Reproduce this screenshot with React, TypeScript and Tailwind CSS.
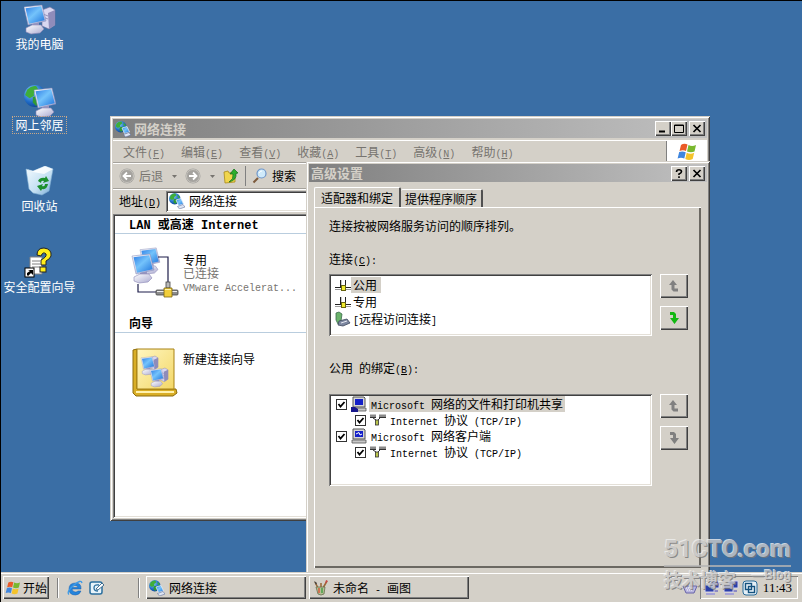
import React, { useState } from 'react';

const windowEdge =
  'bg-[#d4d0c8] p-[3px] shadow-[inset_1px_1px_0_#d4d0c8,inset_-1px_-1px_0_#404040,inset_2px_2px_0_#fff,inset_-2px_-2px_0_#808080]';
const raised =
  'bg-[#d4d0c8] shadow-[inset_1px_1px_0_#fff,inset_-1px_-1px_0_#404040,inset_-2px_-2px_0_#808080]';
const sunken =
  'bg-white p-[2px] shadow-[inset_1px_1px_0_#808080,inset_-1px_-1px_0_#fff,inset_2px_2px_0_#404040,inset_-2px_-2px_0_#e4e0d8]';

interface TxtProps {
  children: string;
  hotkey?: string;
  large?: boolean;
}

// Latin letters take half the width of a Chinese character
const Txt = ({ children, hotkey, large }: TxtProps) => {
  const latin = `font-['Liberation_Mono',monospace] leading-none ${large ? 'text-[12px]' : 'text-[10px]'}`;
  return (
    <span className="whitespace-pre">
      {children.split(/([\x20-\x7e]+)/).map((part, i) =>
        i % 2 ? <span key={i} className={latin}>{part}</span> : part
      )}
      {hotkey && (
        <span className={latin}>
          (<u>{hotkey}</u>)
        </span>
      )}
    </span>
  );
};

const Gradients = () => (
  <svg width="0" height="0" className="absolute" aria-hidden="true">
    <defs>
      <linearGradient id="screen" x1="0" y1="0" x2="1" y2="1">
        <stop offset="0" stopColor="#2f7fe6" />
        <stop offset="0.45" stopColor="#74c3fb" />
        <stop offset="1" stopColor="#1f74dc" />
      </linearGradient>
      <linearGradient id="shell" x1="0" y1="0" x2="1" y2="1">
        <stop offset="0" stopColor="#ffffff" />
        <stop offset="1" stopColor="#a9a8cf" />
      </linearGradient>
      <radialGradient id="globe" cx="0.35" cy="0.3" r="0.8">
        <stop offset="0" stopColor="#8fd3ff" />
        <stop offset="0.6" stopColor="#1f6cc8" />
        <stop offset="1" stopColor="#0c3b86" />
      </radialGradient>
      <linearGradient id="bin" x1="0" y1="0" x2="1" y2="1">
        <stop offset="0" stopColor="#f4fbff" />
        <stop offset="0.6" stopColor="#c3dff2" />
        <stop offset="1" stopColor="#6fa5d2" />
      </linearGradient>
      <linearGradient id="book" x1="0" y1="0" x2="1" y2="1">
        <stop offset="0" stopColor="#fff6c0" />
        <stop offset="1" stopColor="#f3d767" />
      </linearGradient>
    </defs>
  </svg>
);

const Monitor = ({ transform }: { transform?: string }) => (
  <g transform={transform}>
    <path d="M8 18 L15 17 L15 24 L8 25Z" fill="#9a98c2" />
    <path d="M2 24 L8 21 L17 21 L20 25 L16 29 L7 30 L2 28Z" fill="url(#shell)" stroke="#8986b5" strokeWidth="0.6" />
    <path d="M0 3 L18 1 L22 17 L4 21Z" fill="url(#shell)" stroke="#7d86b8" strokeWidth="0.5" />
    <path d="M1.500 4.300 L17.200 2.300 L20.700 16.200 L5 19.700Z" fill="url(#screen)" />
  </g>
);

const Tower = ({ transform }: { transform?: string }) => (
  <g transform={transform}>
    <path d="M0 3 L8 0 L13 3 L13 18 L7 22 L0 19Z" fill="#d9d7f0" stroke="#77739f" strokeWidth="0.6" />
    <path d="M6 6 L13 3 L13 18 L7 22Z" fill="#8f8cba" />
    <path d="M1 7 L6 9 M1 10 L6 12" stroke="#8581ad" strokeWidth="0.8" />
  </g>
);

const Globe = ({ transform }: { transform?: string }) => (
  <g transform={transform}>
    <circle cx="10" cy="10" r="10" fill="url(#globe)" />
    <path d="M3 4 Q7 0 11 1 L13 4 L9 7 L9 10 L5 12 L1 9Z" fill="#3fae3a" />
    <path d="M8 11 L14 10 L16 14 L11 19 L8 16Z" fill="#2f9a35" />
    <path d="M15 3 Q19 6 19 10 L15 8Z" fill="#3fae3a" />
  </g>
);

const ComputerIcon = () => (
  <svg viewBox="0 0 32 32" className="size-8">
    <Tower transform="translate(18 3)" />
    <Monitor />
  </svg>
);

const PlacesIcon = () => (
  <svg viewBox="0 0 32 32" className="size-8">
    <Globe transform="scale(1.1)" />
    <Monitor transform="translate(10 2)" />
  </svg>
);

const RecycleIcon = () => (
  <svg viewBox="0 0 32 32" className="size-8">
    <path d="M2 3 L9 5 L21 0 L29 3 L25 25 L18 29 L9 27 L5 23Z" fill="url(#bin)" stroke="#7faed4" strokeWidth="0.6" />
    <path d="M2 3 L9 6 L20 8 L29 3 L21 0 L9 5Z" fill="#fff" opacity="0.8" />
    <path d="M14 15 Q16 11 21 12 L22 10 L25 15 L19 17 L20 15 Q17 14 17 17Z" fill="#1c8f2d" />
    <path d="M24 18 Q23 24 18 23 L17 25 L13 20 L19 18 L18 20 Q21 21 21 18Z" fill="#1c8f2d" />
  </svg>
);

const WizardIcon = () => (
  <svg viewBox="0 0 32 32" className="size-8">
    <path d="M6 10H18V27H6Z" fill="#fff" stroke="#808080" />
    <path d="M8 14H16M8 17H16M8 20H16" stroke="#808080" />
    <path d="M13 8 Q13 1 20 1 Q28 2 27 9 Q26 12 22 14 L22 18 H17 V13 Q23 10 22 7 Q19 4 17 9Z" fill="#ffee1a" stroke="#222" />
    <rect x="16" y="20" width="6" height="5" fill="#ffee1a" stroke="#222" />
    <rect x="1" y="21" width="9" height="9" fill="#fff" stroke="#000" />
    <path d="M3 28 L3 26 L6 24 L4 23 H9 V28 L7 26 L4 29Z" fill="#000" />
  </svg>
);

const NetIcon = () => (
  <svg viewBox="0 0 32 32" className="size-4 shrink-0">
    <Globe transform="scale(1.15)" />
    <path d="M14 14 L24 11 L29 22 L19 25Z" fill="url(#screen)" stroke="#e6edf8" strokeWidth="1.5" />
    <path d="M17 27 L28 23 L32 28 L21 32Z" fill="#dde4f2" stroke="#4c5f90" />
  </svg>
);

const FlagIcon = ({ className }: { className: string }) => (
  <svg viewBox="0 0 20 18" className={className}>
    <path d="M4 2 Q7 0 10.500 1.500 L9 8 Q6 6.500 2.500 8Z" fill="#ea5a27" />
    <path d="M11.500 2 Q15 4 19 2 L17.500 8.500 Q14 10 10 8.500Z" fill="#79b82e" />
    <path d="M2.200 9 Q5.500 7.800 8.700 9.200 L7.300 15.500 Q4 14 .600 15.500Z" fill="#3f86de" />
    <path d="M9.700 9.800 Q13.500 11.500 17.200 9.800 L15.700 16 Q12 18 8.300 16Z" fill="#f4c32b" />
  </svg>
);

const LanIcon = () => (
  <svg viewBox="0 0 50 52" className="h-[52px] w-[50px] shrink-0">
    <Monitor transform="translate(9 0) scale(0.9)" />
    <Monitor transform="translate(1 6)" />
    <path d="M27 10 H37 V37 M7 37 V45 H25" fill="none" stroke="#1d1d4a" strokeWidth="1.200" />
    <rect x="25" y="43" width="22" height="5" rx="1" fill="#8d8d8d" stroke="#444" strokeWidth="0.800" />
    <path d="M26 44.500 H46" stroke="#eee" />
    <rect x="35" y="35" width="4" height="6" fill="#b9b9b9" stroke="#444" strokeWidth="0.800" />
    <path d="M33 41 H41 V50 H33Z" fill="#f1ce3a" stroke="#7c6512" strokeWidth="0.800" />
    <path d="M34 42.500 H40" stroke="#fff4b0" />
  </svg>
);

const NewConnectionIcon = () => (
  <svg viewBox="0 0 50 52" className="h-[52px] w-[50px] shrink-0">
    <path d="M2 3 L6 2 V42 H45 L46 46 L42 49 H5 L2 46Z" fill="#d9ae26" stroke="#8d6c0c" />
    <path d="M6 2 H43 V42 H6Z" fill="url(#book)" stroke="#a88215" />
    <path d="M5 45 H43" stroke="#fff2ae" strokeWidth="2" />
    <Tower transform="translate(19 9) scale(0.62)" />
    <Monitor transform="translate(10 9) scale(0.63)" />
    <Tower transform="translate(29 21) scale(0.62)" />
    <Monitor transform="translate(19 21) scale(0.63)" />
  </svg>
);

const CircleArrow = ({ forward }: { forward?: boolean }) => (
  <svg viewBox="0 0 16 16" className="size-4">
    <circle cx="8" cy="8" r="7.500" fill="#a5a39f" />
    <circle cx="8" cy="8" r="6.500" fill="none" stroke="#c6c3bd" />
    <path d={forward ? 'M4 8 H11 M8 4.500 L11.500 8 L8 11.500' : 'M12 8 H5 M8 4.500 L4.500 8 L8 11.500'} fill="none" stroke="#fff" strokeWidth="1.800" />
  </svg>
);

const Caret = () => (
  <svg viewBox="0 0 5 3" className="h-[3px] w-[5px]">
    <path d="M0 0H5L2.500 3Z" fill="#77746f" />
  </svg>
);

const FolderUpIcon = () => (
  <svg viewBox="0 0 16 16" className="size-4">
    <path d="M1 4 L5 3 L6 5 L12 4 L12 14 L2 15Z" fill="#f0d54d" stroke="#a98a1a" strokeWidth="0.800" />
    <path d="M6 14 Q11 11 10 6 L7 6 L11 1 L15 5 L13 5.500 Q14 12 6 14Z" fill="#2cae2c" stroke="#0f6f17" strokeWidth="0.700" />
  </svg>
);

const SearchIcon = () => (
  <svg viewBox="0 0 16 16" className="size-4">
    <path d="M6 10 L1.500 14.500" stroke="#7d5a3c" strokeWidth="2" />
    <circle cx="9.500" cy="5.500" r="4.500" fill="#cfeafa" stroke="#6d95c9" strokeWidth="1.200" />
    <path d="M7 5 Q8 3 10 3" stroke="#fff" fill="none" />
  </svg>
);

const AdapterIcon = () => (
  <svg viewBox="0 0 16 14" className="h-[14px] w-4">
    <path d="M0 9.500 H16" stroke="#222" />
    <path d="M0 11.500 H6 M10 11.500 H16" stroke="#9a9a9a" />
    <path d="M5.500 2 V9 M10.500 2 V9" stroke="#222" />
    <rect x="6" y="2" width="1" height="6" fill="#c9c9c9" />
    <rect x="6.500" y="7.500" width="4" height="5" fill="#f0ea2e" stroke="#66620e" />
  </svg>
);

const DialupIcon = () => (
  <svg viewBox="0 0 16 16" className="size-4">
    <path d="M1 2 L4 1 L7 3 L6 10 L3 13 L1 9Z" fill="#6bb36b" stroke="#3b6b4c" strokeWidth="0.800" />
    <path d="M4 10 L12 8 L15 12 L8 15 L3 14Z" fill="#7d87a0" stroke="#3c465c" strokeWidth="0.800" />
    <path d="M6 12 L12 10" stroke="#e5e8f0" />
  </svg>
);

const HostIcon = ({ shared }: { shared?: boolean }) => (
  <svg viewBox="0 0 16 16" className="size-4">
    <path d="M2 1 H13 L14 2 V11 H2Z" fill="#d6d6d6" stroke="#555" />
    <rect x="4" y="3" width="8" height="6" fill="#1420c8" />
    {!shared && <path d="M5 6 L8 4.500 L9 7 L11 6" stroke="#fff" fill="none" />}
    <path d="M1 12 H15 V15 H1Z" fill="#c8c8c8" stroke="#555" strokeWidth="0.800" />
    {shared && <path d="M0 11 H4 L7 13 V16 H0Z" fill="#18188c" />}
  </svg>
);

const ProtocolIcon = () => (
  <svg viewBox="0 0 16 12" className="h-3 w-4">
    <path d="M0 2 H6 M9 2 H16" stroke="#8a8a8a" strokeWidth="3" />
    <path d="M0 3.500 H6 M9 3.500 H16" stroke="#333" />
    <path d="M3 4 L6 6 M10 4 L8 6" stroke="#333" fill="none" />
    <rect x="5.500" y="6" width="3" height="5" fill="#b9c44c" stroke="#333" strokeWidth="0.800" />
  </svg>
);

const MoveIcon = ({ down, color }: { down?: boolean; color: string }) => (
  <svg viewBox="0 0 12 12" className="size-3">
    <path
      d={down ? 'M2 0 H6 L8 2 V6 H11 L6.500 12 L2 6 H5 V3 H2Z' : 'M1 5 L5 0 L9 5 H6.500 V8.500 H10 V11.500 H5.500 L3.500 9.500 V5Z'}
      fill={color}
    />
  </svg>
);

const CaptionButton = ({ label, path }: { label: string; path: React.ReactNode }) => (
  <button aria-label={label} className={`flex h-[15px] w-4 items-center justify-center ${raised}`}>
    <svg viewBox="0 0 10 9" className="h-[9px] w-[10px]" fill="none" stroke="#000">{path}</svg>
  </button>
);

const closePath = <path d="M1.500 1 L8.500 8 M8.500 1 L1.500 8" strokeWidth="1.700" />;

const desktopIcons = [
  { label: '我的电脑', icon: ComputerIcon },
  { label: '网上邻居', icon: PlacesIcon, focused: true },
  { label: '回收站', icon: RecycleIcon },
  { label: '安全配置向导', icon: WizardIcon },
];

const menus = [
  ['文件', 'F'],
  ['编辑', 'E'],
  ['查看', 'V'],
  ['收藏', 'A'],
  ['工具', 'T'],
  ['高级', 'N'],
  ['帮助', 'H'],
];

const NetworkWindow = () => (
  <section className={`absolute left-[109px] top-[115px] flex h-[405px] w-[600px] flex-col ${windowEdge}`}>
    <header className="flex h-[19px] shrink-0 items-center bg-linear-to-r from-[#808080] to-[#c0c0c0] px-[2px]">
      <NetIcon />
      <h1 className="ml-[3px] flex-1 text-[13px] font-bold leading-4 text-[#d4d0c8]">网络连接</h1>
      <CaptionButton label="最小化" path={<path d="M1 7.500H7" strokeWidth="2" />} />
      <CaptionButton label="最大化" path={<path d="M.5 1H9.500V8.500H.5ZM.5 1.500H9.500" />} />
      <span className="w-[2px]" />
      <CaptionButton label="关闭" path={closePath} />
    </header>
    <nav className="mt-[2px] flex h-[23px] shrink-0 items-center border-b border-t border-b-[#a5a29c] border-t-white pl-[10px] text-[#77746f]">
      <div className="flex flex-1 gap-4">
        {menus.map(([name, key]) => (
          <button key={key}>
            <Txt hotkey={key}>{name}</Txt>
          </button>
        ))}
      </div>
      <div className="flex h-full w-[41px] items-center justify-center border-l border-[#808080] bg-white">
        <FlagIcon className="h-[18px] w-5" />
      </div>
    </nav>
    <div className="flex h-[26px] shrink-0 items-center border-b border-t border-b-[#a5a29c] border-t-white pl-[6px]">
      <button className="flex items-center gap-1 text-[#77746f]">
        <CircleArrow />
        后退
      </button>
      <span className="ml-[9px] mr-2"><Caret /></span>
      <button aria-label="前进"><CircleArrow forward /></button>
      <span className="ml-[9px] mr-2"><Caret /></span>
      <button aria-label="向上"><FolderUpIcon /></button>
      <span className="mx-[6px] h-5 border-l border-[#808080]" />
      <button className="flex items-center gap-1">
        <SearchIcon />
        搜索
      </button>
    </div>
    <div className="flex h-[23px] shrink-0 items-center border-t border-white pl-[6px]">
      <label htmlFor="address" className="w-[47px]">
        <Txt hotkey="D">地址</Txt>
      </label>
      <div className={`flex h-[21px] flex-1 items-center gap-1 ${sunken} pl-[3px]`}>
        <NetIcon />
        <input id="address" defaultValue="网络连接" className="min-w-0 flex-1 bg-transparent outline-none" />
      </div>
    </div>
    <main className={`mt-[2px] min-h-0 flex-1 ${sunken}`}>
      <h2 className="h-[18px] border-b border-[#b9cdde] pl-[14px] font-bold">
        <Txt large>LAN 或高速 Internet</Txt>
      </h2>
      <div className="flex gap-[2px] pl-4 pt-[13px]">
        <LanIcon />
        <div className="pt-[6px] leading-[13px]">
          <p>专用</p>
          <p className="text-[#77746f]">已连接</p>
          <p className="text-[#77746f]"><Txt>VMware Accelerat...</Txt></p>
        </div>
      </div>
      <h2 className="mt-4 h-[18px] border-b border-[#b9cdde] pl-[14px] font-bold">向导</h2>
      <div className="flex gap-[2px] pl-4 pt-[14px]">
        <NewConnectionIcon />
        <p className="pt-1">新建连接向导</p>
      </div>
    </main>
  </section>
);

interface MoveButtonsProps {
  canMoveDown?: boolean;
}

const MoveButtons = ({ canMoveDown }: MoveButtonsProps) => (
  <div className="flex flex-col gap-2">
    <button aria-label="上移" disabled className={`flex h-6 w-7 items-center justify-center ${raised}`}>
      <MoveIcon color="#808080" />
    </button>
    <button aria-label="下移" disabled={!canMoveDown} className={`flex h-6 w-7 items-center justify-center ${raised}`}>
      <MoveIcon down color={canMoveDown ? '#12b812' : '#808080'} />
    </button>
  </div>
);

const connections = [
  { name: '公用', icon: AdapterIcon },
  { name: '专用', icon: AdapterIcon },
  { name: '[远程访问连接]', icon: DialupIcon },
];

const initialBindings = [
  { id: 'server', name: 'Microsoft 网络的文件和打印机共享', icon: <HostIcon shared />, child: false, checked: true },
  { id: 'server-ip', name: 'Internet 协议 (TCP/IP)', icon: <ProtocolIcon />, child: true, checked: true },
  { id: 'client', name: 'Microsoft 网络客户端', icon: <HostIcon />, child: false, checked: true },
  { id: 'client-ip', name: 'Internet 协议 (TCP/IP)', icon: <ProtocolIcon />, child: true, checked: true },
];

const AdvancedDialog = () => {
  const [selected, setSelected] = useState('公用');
  const [bindings, setBindings] = useState(initialBindings);

  const toggle = (id: string) => {
    setBindings(bindings.map((b) => (b.id === id ? { ...b, checked: !b.checked } : b)));
  };

  return (
    <section role="dialog" aria-label="高级设置" className={`absolute left-[305px] top-[160px] w-[404px] ${windowEdge}`}>
      <header className="flex h-[18px] items-center bg-linear-to-r from-[#808080] to-[#c0c0c0] px-[2px]">
        <h2 className="flex-1 text-[13px] font-bold leading-4 text-[#d4d0c8]">高级设置</h2>
        <CaptionButton
          label="帮助"
          path={<path d="M2.500 3 Q2.500 .800 5 .800 Q7.500 .800 7.500 2.800 Q7.500 4 5 5 V6 M5 7.200 V9" strokeWidth="1.600" />}
        />
        <span className="w-[2px]" />
        <CaptionButton label="关闭" path={closePath} />
      </header>
      <div className="pb-10 pl-[5px] pr-[6px] pt-[5px]">
        <div role="tablist" className="flex items-end">
          <button role="tab" aria-selected="true" className="h-5 rounded-t-[2px] border-l border-r-2 border-t border-l-white border-r-[#505050] border-t-white px-[6px]">
            适配器和绑定
          </button>
          <button role="tab" aria-selected="false" className="h-[18px] rounded-t-[2px] border-r-2 border-t border-r-[#505050] border-t-white px-1">
            提供程序顺序
          </button>
        </div>
        <div className="h-[361px] pl-[15px] pr-[13px] pt-[11px] shadow-[inset_1px_1px_0_#fff,inset_-2px_-2px_0_#6b6862]">
          <p>连接按被网络服务访问的顺序排列。</p>
          <p className="mt-[17px]"><Txt hotkey="C">连接</Txt><Txt>:</Txt></p>
          <div className="mt-[7px] flex gap-2">
            <ul role="listbox" aria-label="连接" className={`h-[62px] flex-1 ${sunken}`}>
              {connections.map(({ name, icon: Icon }) => (
                <li
                  key={name}
                  role="option"
                  aria-selected={selected === name}
                  onClick={() => setSelected(name)}
                  className="flex h-[17px] items-center pl-1"
                >
                  <Icon />
                  <span className={`pl-[2px] pr-1 ${selected === name ? 'bg-[#d4d0c8]' : ''}`}>
                    <Txt>{name}</Txt>
                  </span>
                </li>
              ))}
            </ul>
            <MoveButtons canMoveDown />
          </div>
          <p className="mt-6"><Txt hotkey="B">公用 的绑定</Txt><Txt>:</Txt></p>
          <div className="mt-[18px] flex gap-2">
            <ul className={`h-[92px] flex-1 ${sunken}`}>
              {bindings.map((b, i) => (
                <li key={b.id} className={b.child ? 'pl-[23px]' : 'pl-1'}>
                  <label className="flex h-4 items-center">
                    <span className="grid size-3 place-items-center">
                      <input
                        type="checkbox"
                        checked={b.checked}
                        onChange={() => toggle(b.id)}
                        className="peer col-start-1 row-start-1 size-[11px] appearance-none border border-[#333] bg-white"
                      />
                      <svg viewBox="0 0 9 9" className="pointer-events-none invisible col-start-1 row-start-1 size-[9px] peer-checked:visible">
                        <path d="M1.500 4 L3.500 6.500 L7.500 2" fill="none" stroke="#000" strokeWidth="1.800" />
                      </svg>
                    </span>
                    <span className="ml-1 flex w-4">{b.icon}</span>
                    <span className={`ml-[2px] px-[2px] ${i === 0 ? 'bg-[#d4d0c8]' : ''}`}>
                      <Txt>{b.name}</Txt>
                    </span>
                  </label>
                </li>
              ))}
            </ul>
            <MoveButtons />
          </div>
        </div>
      </div>
    </section>
  );
};

const Watermark = () => (
  <div className="pointer-events-none absolute bottom-[11px] right-[11px] w-[127px] whitespace-nowrap text-[#c9c9c9] opacity-80 [text-shadow:1px_1px_0_#777,-1px_-1px_0_#eee]">
    <p className="border-b-2 border-[#b5b5b5] text-center font-['Roboto','Liberation_Sans',sans-serif] text-[24px] font-bold leading-8">
      51CTO.com
    </p>
    <p className="flex items-start justify-between font-['Noto_Sans_CJK_SC',sans-serif] text-[18px] font-bold leading-6">
      技术博客
      <span className="font-['Liberation_Sans',sans-serif] text-[12px] leading-4">—Blog</span>
    </p>
  </div>
);

const Divider = () => <span className="h-5 border-l border-r border-l-[#808080] border-r-white" />;

const Taskbar = () => (
  <footer className="flex h-[30px] shrink-0 items-center border-t border-[#d4d0c8] bg-[#d4d0c8] pl-[2px] pr-1 shadow-[inset_0_1px_0_#fff]">
    <button className={`flex h-[23px] w-[46px] items-center gap-[2px] pl-[2px] ${raised}`}>
      <FlagIcon className="h-[14px] w-4" />
      开始
    </button>
    <span className="ml-2 flex"><Divider /></span>
    <div className="ml-2 flex w-[71px] gap-[6px]">
      <button aria-label="Internet Explorer">
        <svg viewBox="0 0 16 16" className="size-4">
          <path d="M14 9 H5 Q5.500 12 8.500 12 Q10 12 11 11 H14 Q12.500 15 8.500 15 Q2 15 2 9 Q2 3 8.500 3 Q14.500 3 14 9ZM5 7.500 H11 Q10.500 5.500 8 5.500 Q5.500 5.500 5 7.500Z" fill="#2484dc" fillRule="evenodd" stroke="#145fae" strokeWidth="0.500" />
          <path d="M2 14.500 Q-1 12 7 5 Q14 -1 15 3" fill="none" stroke="#3c9be8" strokeWidth="1.300" />
        </svg>
      </button>
      <button aria-label="显示桌面">
        <svg viewBox="0 0 16 16" className="size-4">
          <rect x="1" y="2" width="12" height="12" rx="2" fill="#e8f4fb" stroke="#2b6f9e" strokeWidth="1.500" />
          <path d="M10 5 Q5 4 5 8 Q5 11 9 11" fill="none" stroke="#2b6f9e" strokeWidth="1.300" />
          <path d="M7 9 L13 3 L15 5 L9 10Z" fill="#fff" stroke="#1e5177" strokeWidth="0.800" />
        </svg>
      </button>
    </div>
    <Divider />
    <div className="ml-[6px] flex flex-1 gap-[3px]">
      <button className={`flex h-[23px] w-40 items-center gap-1 pl-[3px] ${raised}`}>
        <NetIcon />
        网络连接
      </button>
      <button className={`flex h-[23px] w-40 items-center gap-1 pl-1 ${raised}`}>
        <svg viewBox="0 0 16 16" className="size-4">
          <path d="M5 8 L2 2 M8 8 L8 3 M10 8 L14 1" stroke="#9a6a3a" strokeWidth="1.600" />
          <path d="M1 1 L4 3 L3 5Z" fill="#444" />
          <path d="M13 0 L15 1 L12 4Z" fill="#c44" />
          <path d="M3 7 H12 L11 14 L8 15 L5 14Z" fill="#b5bd94" stroke="#66704c" strokeWidth="0.800" />
          <path d="M6 8 V13" stroke="#d95b3b" strokeWidth="1.500" />
          <path d="M9 8 V13" stroke="#48a048" strokeWidth="1.500" />
        </svg>
        <Txt>未命名 - 画图</Txt>
      </button>
    </div>
    <svg viewBox="0 0 16 16" className="mr-[2px] size-4">
      <path d="M1 6 H15 L12 13 H4Z" fill="#b9b6df" stroke="#6864a8" />
      <path d="M4 8 H12 M5 10 H11" stroke="#fff" strokeDasharray="1 1" />
    </svg>
    <div className="flex h-[23px] items-center gap-[3px] pl-1 pr-[6px] shadow-[inset_1px_1px_0_#808080,inset_-1px_-1px_0_#fff]">
      {[0, 1].map((n) => (
        <svg key={n} viewBox="0 0 16 16" className="size-4">
          <path d="M6 1 H15 V8 H6Z" fill="#2a3fa8" stroke="#d5d3ee" />
          <path d="M8 10 H14 V12 H8Z" fill="#8d8ac4" />
          <path d="M1 5 H10 V12 H1Z" fill="#2a3fa8" stroke="#d5d3ee" />
          <path d="M2 13 H11 V15 H2Z" fill="#a6a3d6" />
        </svg>
      ))}
      <svg viewBox="0 0 16 16" className="size-4" fill="none">
        <rect x="1" y="1" width="14" height="14" rx="3" fill="#e5f0f7" stroke="#276b99" />
        <rect x="3.500" y="3.500" width="6" height="6" stroke="#14527e" strokeWidth="1.400" />
        <rect x="6.500" y="6.500" width="6" height="6" stroke="#14527e" strokeWidth="1.400" />
      </svg>
      <time className="ml-[2px] font-['Liberation_Serif',serif] text-[13px]">11:43</time>
    </div>
  </footer>
);

const App: React.FC = () => (
  <div className="relative flex h-screen flex-col overflow-hidden border-l border-t border-black bg-[#3a6ea5] font-['Noto_Sans_CJK_SC',sans-serif] text-[12px] leading-4 text-black select-none">
    <Gradients />
    <div className="relative min-h-0 flex-1 overflow-hidden">
      <div className="flex w-[77px] flex-col gap-[33px] pt-[3px]">
        {desktopIcons.map(({ label, icon: Icon, focused }) => (
          <button key={label} className="flex flex-col items-center text-white">
            <Icon />
            <span className={`whitespace-nowrap px-[2px] ${focused ? 'outline-1 outline-dotted outline-[#c8a888]' : ''}`}>
              {label}
            </span>
          </button>
        ))}
      </div>
      <NetworkWindow />
      <AdvancedDialog />
    </div>
    <Taskbar />
    <Watermark />
  </div>
);

export default App;
